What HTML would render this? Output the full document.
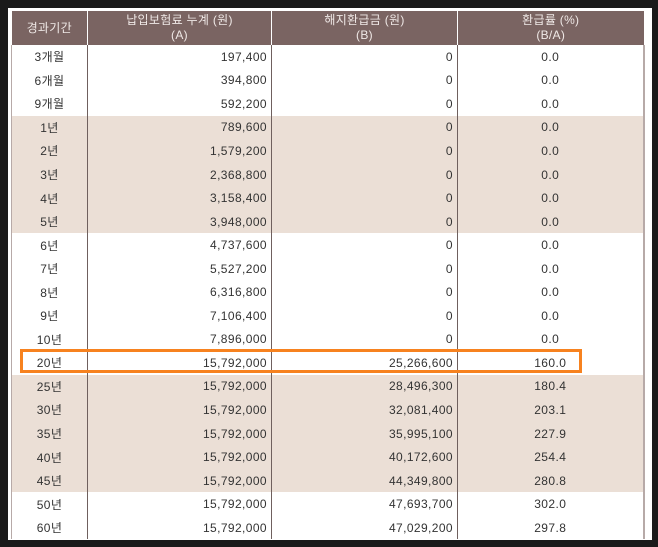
<!DOCTYPE html>
<html><head><meta charset="utf-8"><style>
body{margin:0;background:#1a1a1a;width:658px;height:547px;position:relative;overflow:hidden;font-family:"Liberation Sans","Noto Sans CJK KR",sans-serif;}
.panel{position:absolute;left:8px;top:8px;width:644px;height:532px;background:#fff;}
table{position:absolute;left:11px;top:11px;border-collapse:collapse;table-layout:fixed;width:632px;}
th{background:#7a6462;color:#efe8e6;font-weight:normal;font-size:12px;line-height:15px;height:34px;padding:0;border-left:1px solid #fff;text-align:center;letter-spacing:0.3px}
th:first-child{border-left:none}
td{height:23.55px;padding:0;font-size:12px;color:#333;border-left:1px solid #6f605e;letter-spacing:0.4px}
td:first-child{border-left:1px solid #b7aaa8;text-align:center}
td:nth-child(2),td:nth-child(3){text-align:right;padding-right:4px}
td:nth-child(4){text-align:center;border-right:2px solid #b7aaa8}
tr.b td{background:#ebdfd6}
.box{position:absolute;left:20px;top:349px;width:556px;height:18px;border:3px solid #f7821f;}
</style></head><body>
<div class="panel"></div>
<table>
<colgroup><col style="width:76px"><col style="width:184px"><col style="width:186px"><col style="width:186px"></colgroup>
<tr><th>경과기간</th><th>납입보험료 누계 (원)<br>(A)</th><th>해지환급금 (원)<br>(B)</th><th>환급률 (%)<br>(B/A)</th></tr>
<tr><td>3개월</td><td>197,400</td><td>0</td><td>0.0</td></tr>
<tr><td>6개월</td><td>394,800</td><td>0</td><td>0.0</td></tr>
<tr><td>9개월</td><td>592,200</td><td>0</td><td>0.0</td></tr>
<tr class="b"><td>1년</td><td>789,600</td><td>0</td><td>0.0</td></tr>
<tr class="b"><td>2년</td><td>1,579,200</td><td>0</td><td>0.0</td></tr>
<tr class="b"><td>3년</td><td>2,368,800</td><td>0</td><td>0.0</td></tr>
<tr class="b"><td>4년</td><td>3,158,400</td><td>0</td><td>0.0</td></tr>
<tr class="b"><td>5년</td><td>3,948,000</td><td>0</td><td>0.0</td></tr>
<tr><td>6년</td><td>4,737,600</td><td>0</td><td>0.0</td></tr>
<tr><td>7년</td><td>5,527,200</td><td>0</td><td>0.0</td></tr>
<tr><td>8년</td><td>6,316,800</td><td>0</td><td>0.0</td></tr>
<tr><td>9년</td><td>7,106,400</td><td>0</td><td>0.0</td></tr>
<tr><td>10년</td><td>7,896,000</td><td>0</td><td>0.0</td></tr>
<tr><td>20년</td><td>15,792,000</td><td>25,266,600</td><td>160.0</td></tr>
<tr class="b"><td>25년</td><td>15,792,000</td><td>28,496,300</td><td>180.4</td></tr>
<tr class="b"><td>30년</td><td>15,792,000</td><td>32,081,400</td><td>203.1</td></tr>
<tr class="b"><td>35년</td><td>15,792,000</td><td>35,995,100</td><td>227.9</td></tr>
<tr class="b"><td>40년</td><td>15,792,000</td><td>40,172,600</td><td>254.4</td></tr>
<tr class="b"><td>45년</td><td>15,792,000</td><td>44,349,800</td><td>280.8</td></tr>
<tr><td>50년</td><td>15,792,000</td><td>47,693,700</td><td>302.0</td></tr>
<tr><td>60년</td><td>15,792,000</td><td>47,029,200</td><td>297.8</td></tr>
</table>
<div class="box"></div>
</body></html>
